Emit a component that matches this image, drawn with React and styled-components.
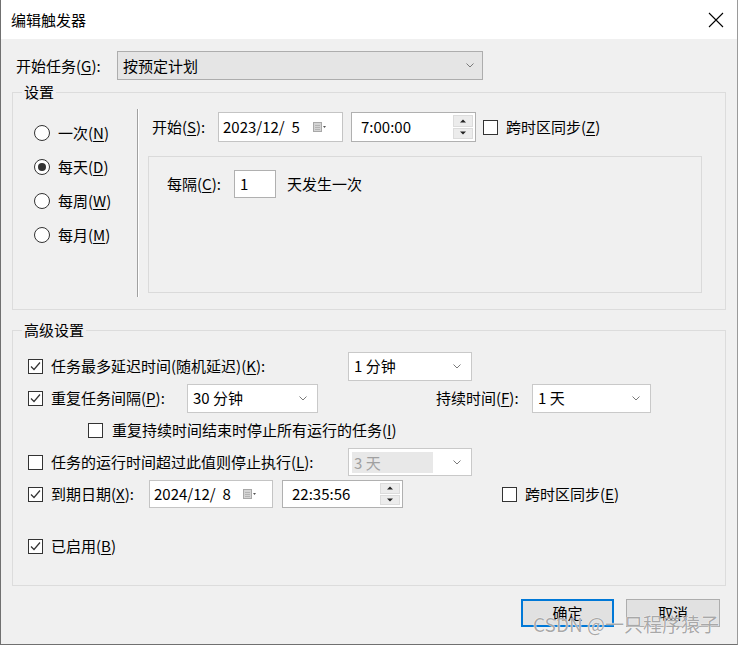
import React from "react";
import styled, { createGlobalStyle } from "styled-components";

const GlobalStyle = createGlobalStyle`
  html, body { margin: 0; padding: 0; background: #f0f0f0; }
  body {
    font-family: "Noto Sans CJK SC", "Noto Sans", sans-serif;
    font-size: 15px;
    color: #000;
  }
  * { box-sizing: border-box; }
  u { text-underline-offset: 2px; }
`;

const Window = styled.div`
  position: relative;
  width: 738px;
  height: 645px;
  background: #f0f0f0;
  border-left: 1px solid #707070;
  border-right: 1px solid #9a9a9a;
  border-bottom: 1px solid #707070;
  display: flex;
  flex-direction: column;
  overflow: hidden;
`;

const TitleBar = styled.div`
  height: 39px;
  flex: none;
  background: #fff;
  display: flex;
  align-items: center;
  justify-content: space-between;
  padding: 0 13px 0 10px;
`;

const Title = styled.div`
  font-size: 15px;
  line-height: 18px;
`;

const Body = styled.div`
  padding: 0 11px;
  display: flex;
  flex-direction: column;
`;

const Row = styled.div`
  display: flex;
  align-items: center;
  height: ${(p) => p.$h || 32}px;
  margin-top: ${(p) => p.$mt || 0}px;
  padding-left: ${(p) => p.$pl || 0}px;
  flex: none;
`;

const Label = styled.span`
  display: inline-block;
  flex: none;
  width: ${(p) => (p.$w ? `${p.$w}px` : "auto")};
  margin-left: ${(p) => p.$ml || 0}px;
  padding-left: ${(p) => p.$pl || 0}px;
  line-height: 18px;
  white-space: nowrap;
  color: ${(p) => (p.$disabled ? "#a0a0a0" : "#000")};
`;

const ComboBox = styled.div`
  flex: none;
  width: ${(p) => p.$w}px;
  height: ${(p) => p.$h || 29}px;
  margin-left: ${(p) => p.$ml || 0}px;
  display: flex;
  align-items: center;
  justify-content: space-between;
  padding: 0 ${(p) => p.$pr || 10}px 0 ${(p) => p.$pl || 5}px;
  background: ${(p) => (p.$gray ? "#e5e5e5" : "#fff")};
  border: 1px solid ${(p) => (p.$gray ? "#adadad" : "#c9c9c9")};
  line-height: 18px;
  white-space: nowrap;
`;

const DisabledField = styled.div`
  flex: 1;
  align-self: stretch;
  margin: 3px 20px 2px -2px;
  padding-left: 2px;
  background: #e8e8e8;
  color: #a0a0a0;
  display: flex;
  align-items: center;
`;

const Group = styled.fieldset`
  margin: ${(p) => p.$mt || 0}px 0 0 0;
  padding: 0;
  border: 1px solid #dcdcdc;
  min-width: 0;
  flex: none;
`;

const Legend = styled.legend`
  margin-left: 9px;
  padding: 0 2px;
  font-size: 15px;
  line-height: 16px;
`;

const SettingsBody = styled.div`
  display: flex;
  height: 209px;
  padding: 9px 0 12px 0;
`;

const RadioCol = styled.div`
  width: 124px;
  flex: none;
  padding: 7px 0 0 21px;
  display: flex;
  flex-direction: column;
`;

const RadioRow = styled.div`
  height: 34px;
  display: flex;
  align-items: center;
  gap: 8px;
`;

const RadioCircle = styled.span`
  width: 16px;
  height: 16px;
  border-radius: 50%;
  border: 1px solid #333;
  background: #fff;
  display: flex;
  align-items: center;
  justify-content: center;
  flex: none;
  &::after {
    content: "";
    width: 8px;
    height: 8px;
    border-radius: 50%;
    background: ${(p) => (p.$on ? "#333" : "transparent")};
  }
`;

const Separator = styled.div`
  width: 2px;
  flex: none;
  border-left: 1px solid #a0a0a0;
  border-right: 1px solid #fff;
`;

const RightCol = styled.div`
  flex: 1;
  margin: 0 23px 0 9px;
  padding-top: 3px;
  display: flex;
  flex-direction: column;
`;

const InputBox = styled.div`
  flex: none;
  width: ${(p) => p.$w}px;
  height: ${(p) => p.$h || 30}px;
  margin-left: ${(p) => p.$ml || 0}px;
  background: #fff;
  border: 1px solid ${(p) => p.$border || "#c4c4c4"};
  display: flex;
  align-items: center;
  justify-content: space-between;
  padding: 0 ${(p) => p.$pr || 2}px 0 ${(p) => p.$pl || 4}px;
  line-height: 18px;
  white-space: pre;
`;

const Spinner = styled.div`
  width: 20px;
  align-self: stretch;
  margin: 2px 0;
  display: flex;
  flex-direction: column;
  gap: 1px;
`;

const SpinButton = styled.div`
  flex: 1;
  background: #ececec;
  border: 1px solid #dcdcdc;
  display: flex;
  align-items: center;
  justify-content: center;
`;

const CheckBoxBox = styled.span`
  width: 15px;
  height: 15px;
  flex: none;
  border: 1px solid #333;
  background: #fff;
  margin-left: ${(p) => p.$ml || 0}px;
  margin-right: ${(p) => p.$mr ?? 8}px;
  display: flex;
  align-items: center;
  justify-content: center;
`;

const Panel = styled.div`
  margin-top: 14px;
  height: 137px;
  border: 1px solid #dadada;
  padding: 13px 0 0 18px;
`;

const AdvBody = styled.div`
  padding: 12px 0 23px 15px;
  display: flex;
  flex-direction: column;
`;

const ButtonRow = styled.div`
  display: flex;
  justify-content: flex-end;
  gap: 12px;
  padding-right: 6px;
  margin-top: 13px;
`;

const Button = styled.div`
  width: ${(p) => (p.$primary ? 93 : 94)}px;
  height: 28px;
  background: #e1e1e1;
  border: ${(p) => (p.$primary ? "2px solid #0078d7" : "1px solid #adadad")};
  display: flex;
  align-items: center;
  justify-content: center;
  line-height: 18px;
`;

const Watermark = styled.div`
  position: absolute;
  left: 532px;
  top: 611px;
  font-size: 19px;
  line-height: 26px;
  color: rgba(110, 110, 110, 0.6);
  white-space: nowrap;
  text-shadow: 0 0 1px #fff, 0 0 1px #fff;
  pointer-events: none;
`;

const Chevron = () => (
  <svg width="8" height="5" viewBox="0 0 8 5">
    <path d="M0.5 0.5 L4 4 L7.5 0.5" fill="none" stroke="#7a7a7a" strokeWidth="1" />
  </svg>
);

const CloseIcon = () => (
  <svg width="16" height="16" viewBox="0 0 16 16">
    <path d="M1 1 L15 15 M15 1 L1 15" stroke="#000" strokeWidth="1.1" />
  </svg>
);

const CalendarIcon = () => (
  <svg width="14" height="10" viewBox="0 0 14 10">
    <rect x="0.5" y="0.5" width="8" height="9" fill="#d4d4d4" stroke="#a8a8a8" />
    <path d="M2 3.5 H7 M2 5.5 H7 M2 7.5 H7" stroke="#b4b4b4" strokeWidth="1" />
    <path d="M10 4 L13 4 L11.5 6 Z" fill="#555" />
  </svg>
);

const Up = () => (
  <svg width="6" height="4" viewBox="0 0 6 4">
    <path d="M0 3.5 L3 0.5 L6 3.5 Z" fill="#222" />
  </svg>
);
const Down = () => (
  <svg width="6" height="4" viewBox="0 0 6 4">
    <path d="M0 0.5 L3 3.5 L6 0.5 Z" fill="#222" />
  </svg>
);

const Check = ({ on, ml, mr }) => (
  <CheckBoxBox $ml={ml} $mr={mr}>
    {on && (
      <svg width="13" height="13" viewBox="0 0 13 13">
        <path d="M2 6.5 L5 9.5 L11 2.5" fill="none" stroke="#333" strokeWidth="1.2" />
      </svg>
    )}
  </CheckBoxBox>
);

const Radio = ({ on, children }) => (
  <RadioRow>
    <RadioCircle $on={on} />
    <Label>{children}</Label>
  </RadioRow>
);

const TimeField = ({ w, ml, h, value }) => (
  <InputBox $w={w} $ml={ml} $h={h} $pl={9} $pr={2} $border="#b0b0b0">
    <span>{value}</span>
    <Spinner>
      <SpinButton><Up /></SpinButton>
      <SpinButton><Down /></SpinButton>
    </Spinner>
  </InputBox>
);

const DateField = ({ w, h, value }) => (
  <InputBox $w={w} $h={h} $pl={4} $pr={15}>
    <span>{value}</span>
    <CalendarIcon />
  </InputBox>
);

export default function App() {
  return (
    <>
      <GlobalStyle />
      <Window>
        <TitleBar>
          <Title>编辑触发器</Title>
          <CloseIcon />
        </TitleBar>
        <Body>
          <Row $h={29} $mt={12}>
            <Label $w={105} $pl={4}>开始任务(<u>G</u>):</Label>
            <ComboBox $w={366} $gray $pl={5} $pr={8}>
              <span>按预定计划</span>
              <Chevron />
            </ComboBox>
          </Row>

          <Group $mt={4}>
            <Legend>设置</Legend>
            <SettingsBody>
              <RadioCol>
                <Radio>一次(<u>N</u>)</Radio>
                <Radio on>每天(<u>D</u>)</Radio>
                <Radio>每周(<u>W</u>)</Radio>
                <Radio>每月(<u>M</u>)</Radio>
              </RadioCol>
              <Separator />
              <RightCol>
                <Row $h={30}>
                  <Label $w={70} $pl={4}>开始(<u>S</u>):</Label>
                  <DateField w={125} value={"2023/12/  5"} />
                  <TimeField w={125} ml={8} value="7:00:00" />
                  <Check ml={7} />
                  <Label>跨时区同步(<u>Z</u>)</Label>
                </Row>
                <Panel>
                  <Row $h={28}>
                    <Label $w={67}>每隔(<u>C</u>):</Label>
                    <InputBox $w={42} $h={28} $pl={5} $border="#b0b0b0">1</InputBox>
                    <Label $ml={11}>天发生一次</Label>
                  </Row>
                </Panel>
              </RightCol>
            </SettingsBody>
          </Group>

          <Group $mt={12}>
            <Legend>高级设置</Legend>
            <AdvBody>
              <Row>
                <Check on />
                <Label $w={297}>任务最多延迟时间(随机延迟)(<u>K</u>):</Label>
                <ComboBox $w={124} $pr={10}>
                  <span>1 分钟</span>
                  <Chevron />
                </ComboBox>
              </Row>
              <Row>
                <Check on />
                <Label $w={136}>重复任务间隔(<u>P</u>):</Label>
                <ComboBox $w={131} $pr={10}>
                  <span>30 分钟</span>
                  <Chevron />
                </ComboBox>
                <Label $ml={118} $w={96}>持续时间(<u>F</u>):</Label>
                <ComboBox $w={119} $pr={10}>
                  <span>1 天</span>
                  <Chevron />
                </ComboBox>
              </Row>
              <Row $pl={60}>
                <Check mr={9} />
                <Label>重复持续时间结束时停止所有运行的任务(<u>I</u>)</Label>
              </Row>
              <Row>
                <Check />
                <Label $w={297}>任务的运行时间超过此值则停止执行(<u>L</u>):</Label>
                <ComboBox $w={124} $h={28} $pr={10}>
                  <DisabledField>3 天</DisabledField>
                  <Chevron />
                </ComboBox>
              </Row>
              <Row>
                <Check on />
                <Label $w={98}>到期日期(<u>X</u>):</Label>
                <DateField w={124} h={28} value={"2024/12/  8"} />
                <TimeField w={121} ml={9} h={28} value="22:35:56" />
                <Check ml={99} />
                <Label>跨时区同步(<u>E</u>)</Label>
              </Row>
              <Row $mt={20}>
                <Check on />
                <Label>已启用(<u>B</u>)</Label>
              </Row>
            </AdvBody>
          </Group>

          <ButtonRow>
            <Button $primary>确定</Button>
            <Button>取消</Button>
          </ButtonRow>
        </Body>
        <Watermark>CSDN @一只程序猿子</Watermark>
      </Window>
    </>
  );
}
